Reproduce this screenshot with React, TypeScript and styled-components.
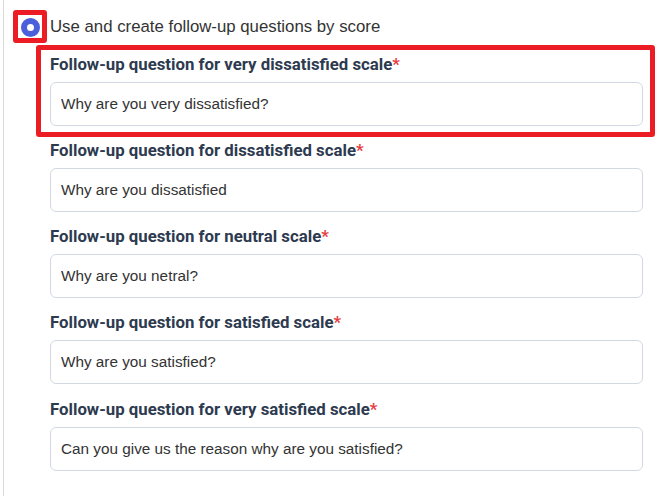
import React from "react";
import styled, { createGlobalStyle } from "styled-components";

const GlobalStyle = createGlobalStyle`
  html, body {
    margin: 0;
    padding: 0;
    background: #fff;
  }
`;

const questions = [
  { scale: "very dissatisfied", value: "Why are you very dissatisfied?", marked: true },
  { scale: "dissatisfied", value: "Why are you dissatisfied", marked: false },
  { scale: "neutral", value: "Why are you netral?", marked: false },
  { scale: "satisfied", value: "Why are you satisfied?", marked: false },
  { scale: "very satisfied", value: "Can you give us the reason why are you satisfied?", marked: false },
];

const App: React.FC = () => {
  return (
    <>
      <GlobalStyle />
      <Page>
        <RadioRow>
          <RadioMark>
            <Radio />
          </RadioMark>
          <RadioText>Use and create follow-up questions by score</RadioText>
        </RadioRow>
        <Fields>
          {questions.map((q, index) => (
            <Field key={index} $marked={q.marked}>
              <Label>
                Follow-up question for {q.scale} scale<Required>*</Required>
              </Label>
              <Input defaultValue={q.value} />
            </Field>
          ))}
        </Fields>
      </Page>
    </>
  );
};

const Page = styled.div`
  margin-left: 3px;
  min-height: 496px;
  box-sizing: border-box;
  border-left: 1px solid #d9d9d9;
  padding: 10px 0 0 9px;
`;

const RadioRow = styled.div`
  display: flex;
  align-items: center;
  gap: 3px;
`;

const RadioMark = styled.span`
  width: 34px;
  height: 33px;
  box-sizing: border-box;
  border: 5px solid #ec1c24;
  border-radius: 3px;
  display: flex;
  align-items: center;
  justify-content: center;
`;

const Radio = styled.span`
  width: 19px;
  height: 19px;
  box-sizing: border-box;
  border-radius: 50%;
  border: 6px solid #4c5fdb;
  background: #fff;
  margin-top: 1px;
`;

const RadioText = styled.span`
  font-family: "Liberation Sans", Arial, sans-serif;
  font-size: 16.8px;
  color: #333;
`;

const Fields = styled.div`
  display: flex;
  flex-direction: column;
  gap: 14.3px;
  width: 593px;
  margin: 10.5px 0 0 37px;
`;

const Field = styled.div<{ $marked: boolean }>`
  position: relative;
  display: flex;
  flex-direction: column;
  gap: 8px;

  &::after {
    content: "";
    display: ${(p) => (p.$marked ? "block" : "none")};
    position: absolute;
    top: -8.5px;
    left: -14px;
    right: -12px;
    bottom: -11.5px;
    border: 5px solid #ec1c24;
    border-radius: 3px;
    pointer-events: none;
  }
`;

const Label = styled.label`
  font-family: Roboto, "Liberation Sans", sans-serif;
  font-size: 16.8px;
  font-weight: 700;
  line-height: 20px;
  color: #2d3a4f;
`;

const Required = styled.span`
  color: #e53e3e;
`;

const Input = styled.input`
  height: 44px;
  box-sizing: border-box;
  border: 1px solid #d3d9e2;
  border-radius: 6px;
  padding: 0 10px;
  font-family: "Liberation Sans", Arial, sans-serif;
  font-size: 15.3px;
  color: #333;
  background: #fff;
  outline: none;
`;

export default App;
